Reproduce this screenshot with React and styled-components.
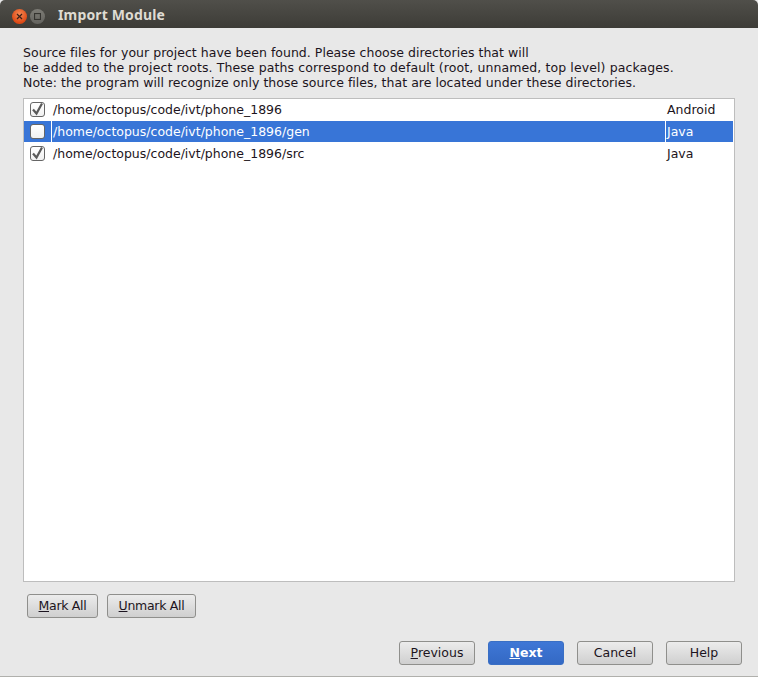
import React from "react";
import styled, { createGlobalStyle } from "styled-components";

const GlobalStyle = createGlobalStyle`
  html, body {
    margin: 0;
    padding: 0;
    background: #e8e8e8;
  }
  body {
    font-family: "DejaVu Sans", sans-serif;
    font-size: 12.5px;
    color: #1c1420;
  }
`;

const Window = styled.div`
  width: 758px;
  height: 677px;
  display: flex;
  flex-direction: column;
  background: #e8e8e8;
  box-sizing: border-box;
  border-bottom: 1px solid #b0b0ac;
  overflow: hidden;
`;

const TitleBar = styled.div`
  height: 28px;
  flex: none;
  box-sizing: border-box;
  padding: 1px 0 0 12px;
  display: flex;
  align-items: center;
  background: linear-gradient(#504f4a, #3d3c37);
  border-radius: 5px 5px 0 0;
`;

const Dots = styled.div`
  display: flex;
  gap: 3px;
  padding-top: 3px;
`;

const CloseDot = styled.div`
  width: 15px;
  height: 15px;
  border-radius: 50%;
  background: radial-gradient(circle at 50% 35%, #f58a55, #dd4814 70%);
  display: flex;
  align-items: center;
  justify-content: center;
`;

const MaxDot = styled(CloseDot)`
  background: linear-gradient(#7c7b75, #64635e);
`;

const Title = styled.div`
  margin-left: 13px;
  font-family: "Noto Sans", sans-serif;
  font-size: 14px;
  font-weight: 700;
  color: #dfdbd2;
  letter-spacing: 0.15px;
`;

const Body = styled.div`
  flex: 1;
  display: flex;
  flex-direction: column;
  padding: 17px 23px 0;
  min-height: 0;
`;

const Intro = styled.div`
  line-height: 15px;
  white-space: nowrap;
`;

const IntroLine = styled.div`
  letter-spacing: ${(p) => p.$spacing}px;
`;

const List = styled.div`
  margin-top: 8px;
  height: 484px;
  flex: none;
  background: #fff;
  border: 1px solid #bdbdbd;
  box-sizing: border-box;
  padding-right: 1px;
`;

const Row = styled.div`
  height: 21px;
  margin-bottom: 1px;
  display: grid;
  grid-template-columns: 28px 613px 1fr;
  align-items: center;
  color: ${(p) => (p.$selected ? "#fff" : "#1c1420")};
  background: ${(p) => (p.$selected ? "#3875d7" : "transparent")};
`;

const CheckCell = styled.div`
  height: 100%;
  display: flex;
  align-items: center;
  padding-left: 6px;
  box-sizing: border-box;
  border-right: ${(p) => (p.$selected ? "1px solid #fff" : "none")};
`;

const CheckBox = styled.div`
  width: 15px;
  height: 15px;
  box-sizing: border-box;
  border: 1px solid #666;
  border-radius: 3px;
  background: linear-gradient(#fff, #f1f1f1);
  position: relative;
`;

const Check = styled.svg`
  position: absolute;
  left: 0;
  top: -1px;
`;

const PathCell = styled.div`
  padding-left: 1px;
`;

const TypeCell = styled.div`
  height: 100%;
  display: flex;
  align-items: center;
  padding-left: 1px;
  box-sizing: border-box;
  border-left: ${(p) => (p.$selected ? "1px solid #fff" : "1px solid transparent")};
`;

const MarkRow = styled.div`
  display: flex;
  gap: 9px;
  margin: 12px 0 0 4px;
`;

const Button = styled.button`
  width: ${(p) => p.$w}px;
  height: 24px;
  padding: 0 0 2px;
  box-sizing: border-box;
  border-radius: 3px;
  font-family: "DejaVu Sans", sans-serif;
  font-size: 12.5px;
  font-weight: ${(p) => (p.$primary ? 700 : 400)};
  color: ${(p) => (p.$primary ? "#fff" : "#1c1420")};
  border: 1px solid ${(p) => (p.$primary ? "#3a6fc4" : "#8f8f8c")};
  background: ${(p) =>
    p.$primary
      ? "linear-gradient(#3f77d6, #3469c4)"
      : "linear-gradient(#ececec, #cfcfcf)"};
`;

const MarkButton = styled(Button)`
  letter-spacing: -0.3px;
`;

const Footer = styled.div`
  display: flex;
  justify-content: flex-end;
  gap: 13px;
  margin: 23px -7px 0 0;
`;

const rows = [
  { path: "/home/octopus/code/ivt/phone_1896", type: "Android", checked: true },
  { path: "/home/octopus/code/ivt/phone_1896/gen", type: "Java", checked: false, selected: true },
  { path: "/home/octopus/code/ivt/phone_1896/src", type: "Java", checked: true },
];

export default function App() {
  return (
    <>
      <GlobalStyle />
      <Window>
        <TitleBar>
          <Dots>
            <CloseDot>
              <svg width="7" height="7" viewBox="0 0 7 7">
                <path d="M1 1l5 5M6 1L1 6" stroke="#3c2018" strokeWidth="1.2" />
              </svg>
            </CloseDot>
            <MaxDot>
              <svg width="7" height="7" viewBox="0 0 7 7">
                <rect x="0.5" y="0.5" width="6" height="6" fill="none" stroke="#34332f" strokeWidth="1.2" />
              </svg>
            </MaxDot>
          </Dots>
          <Title>Import Module</Title>
        </TitleBar>
        <Body>
          <Intro>
            <IntroLine $spacing={0.025}>
              Source files for your project have been found. Please choose directories that will
            </IntroLine>
            <IntroLine $spacing={0.1}>
              be added to the project roots. These paths correspond to default (root, unnamed, top level) packages.
            </IntroLine>
            <IntroLine $spacing={0.03}>
              Note: the program will recognize only those source files, that are located under these directories.
            </IntroLine>
          </Intro>
          <List>
            {rows.map((r) => (
              <Row key={r.path} $selected={r.selected}>
                <CheckCell $selected={r.selected}>
                  <CheckBox>
                    {r.checked && (
                      <Check width="13" height="14" viewBox="0 0 13 14">
                        <path d="M2 7.5l3.5 4L11 1.5" fill="none" stroke="#5a5a5a" strokeWidth="2.2" />
                      </Check>
                    )}
                  </CheckBox>
                </CheckCell>
                <PathCell>{r.path}</PathCell>
                <TypeCell $selected={r.selected}>{r.type}</TypeCell>
              </Row>
            ))}
          </List>
          <MarkRow>
            <MarkButton $w={71}><u>M</u>ark All</MarkButton>
            <MarkButton $w={89}><u>U</u>nmark All</MarkButton>
          </MarkRow>
          <Footer>
            <Button $w={76}><u>P</u>revious</Button>
            <Button $w={76} $primary><u>N</u>ext</Button>
            <Button $w={76}>Cancel</Button>
            <Button $w={76}>Help</Button>
          </Footer>
        </Body>
      </Window>
    </>
  );
}
